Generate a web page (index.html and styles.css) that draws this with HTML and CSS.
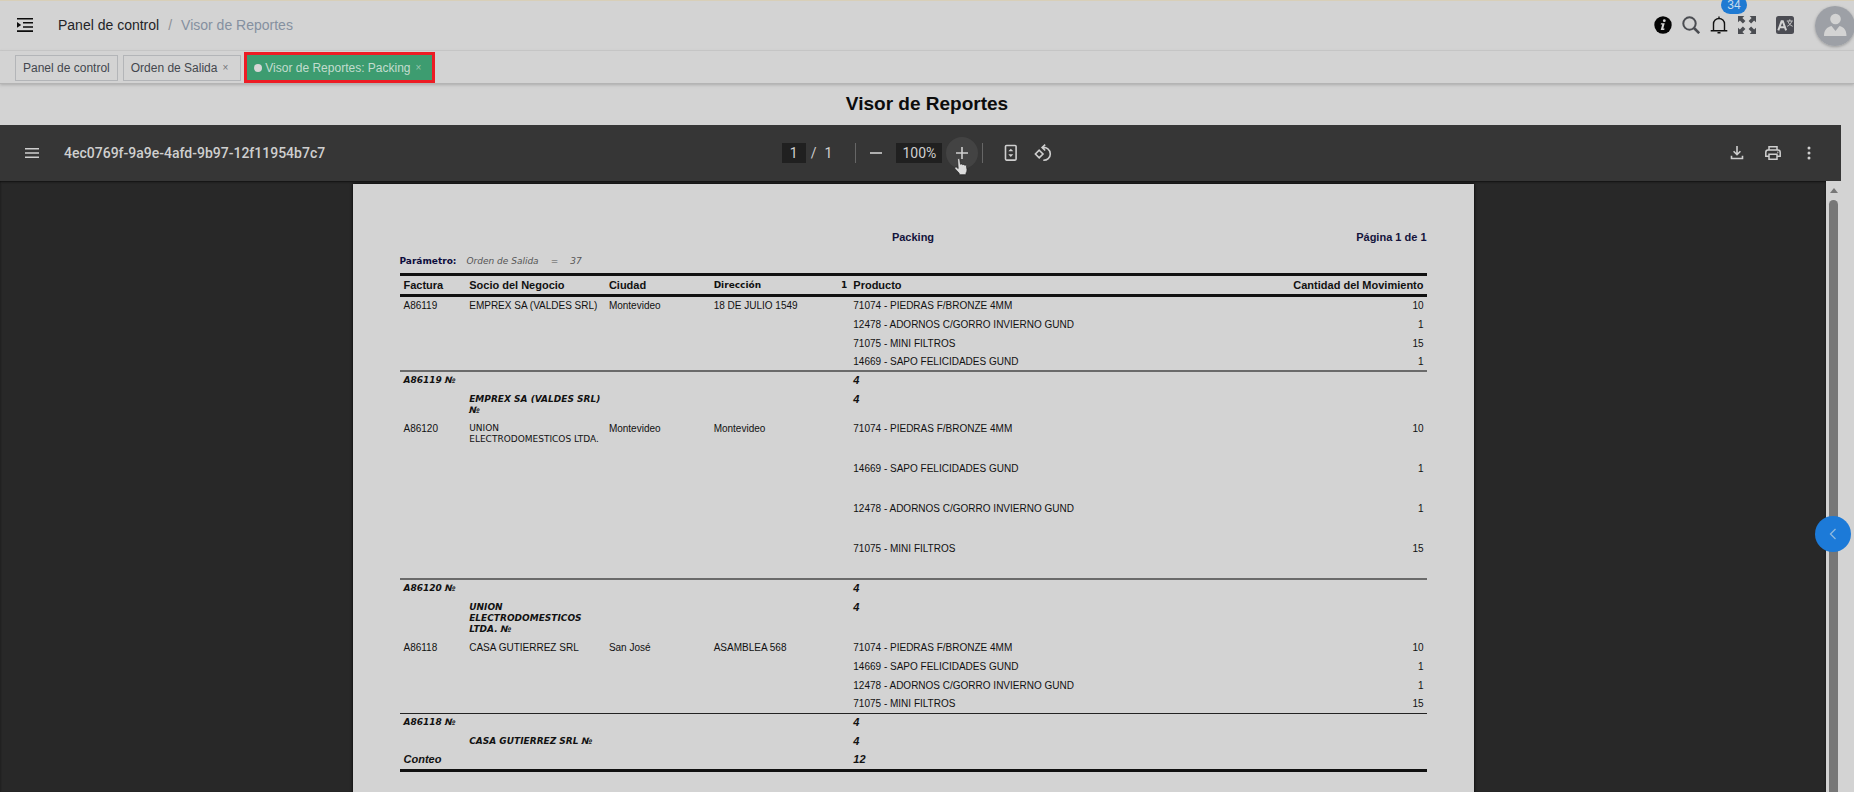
FILE: index.html
```html
<!DOCTYPE html>
<html lang="es">
<head>
<meta charset="utf-8">
<title>Visor de Reportes</title>
<link rel="stylesheet" href="styles.css">
</head>
<body>
<div class="app">
  <header class="navbar">
    <button class="icon-btn toggle" aria-label="Menú">
      <svg width="16" height="14" viewBox="0 0 16 14"><path d="M0 0h16v1.6H0zM6 4h10v1.6H6zM6 8.2h10v1.6H6zM0 12.3h16v1.6H0zM0 4l4.2 2.9L0 9.800z" fill="#0c0c0c"/></svg>
    </button>
    <nav class="breadcrumb"><a href="#">Panel de control</a><span class="slash">/</span><span>Visor de Reportes</span></nav>
    <div class="tools">
      <button class="icon-btn info" aria-label="Información">
        <svg width="18" height="18" viewBox="0 0 18 18"><circle cx="9" cy="9" r="8.700" fill="#050505"/><circle cx="10.300" cy="4.700" r="1.400" fill="#d3d3d3"/><path d="M7 7.200h3.700L9.300 12.600h1.300l-.4 1.300H6.700l1.500-5.400H6.700z" fill="#d3d3d3"/></svg>
      </button>
      <button class="icon-btn" aria-label="Buscar">
        <svg width="18" height="18" viewBox="0 0 18 18" fill="none" stroke="#4b4d52"><circle cx="7.500" cy="7.500" r="6.200" stroke-width="2"/><path d="M12 12l5.200 5.200" stroke-width="2.600"/></svg>
      </button>
      <button class="icon-btn bell" aria-label="Notificaciones">
        <svg width="18" height="18" viewBox="0 0 18 18" fill="none" stroke="#111" stroke-width="1.400"><path d="M3.500 14.600V8a5.500 5.500 0 0 1 11 0v6.600M.7 14.700h16.600M9 .5v2M7.500 16.700h3"/></svg>
        <span class="badge">34</span>
      </button>
      <button class="icon-btn" aria-label="Pantalla completa">
        <svg width="18" height="18" viewBox="0 0 18 18" fill="#4b4d52"><path d="M0 0h6.300L4.400 1.900l3 3-2.500 2.500-3-3L0 6.300z"/><path d="M18 0h-6.300l1.900 1.900-3 3 2.500 2.500 3-3L18 6.300zM0 18h6.300l-1.900-1.900 3-3-2.500-2.500-3 3L0 11.700zM18 18h-6.300l1.900-1.900-3-3 2.500-2.500 3 3 1.900-1.900z"/></svg>
      </button>
      <button class="icon-btn lang" aria-label="Idioma">
        <svg width="18" height="18" viewBox="0 0 18 18" fill="none" stroke="#d3d3d3"><rect width="18" height="18" rx="2.500" fill="#4b4c53" stroke="none"/><path d="M2.300 14.300L5.600 5.300h1.200l3.300 9M3.700 11.300h5" stroke-width="2"/><path d="M10.800 5h6M13.800 3.300V5M15.700 5.300c-.6 2.300-2.200 4-4.500 5M12 5.300c.6 2.300 2.200 4 4.700 5" stroke-width=".9"/></svg>
      </button>
      <button class="icon-btn avatar" aria-label="Usuario">
        <svg width="40" height="40" viewBox="0 0 40 40"><circle cx="20" cy="20" r="20" fill="#9da0a6"/><circle cx="20.500" cy="13" r="5.300" fill="#d3d3d3"/><path d="M9 30c0-6 3-9 7.500-10l4 5 4-5c4.500 1 7 4 7 10z" fill="#d3d3d3"/></svg>
      </button>
    </div>
  </header>
  <nav class="tabs">
    <a class="tab" href="#">Panel de control</a>
    <a class="tab closable" href="#">Orden de Salida <span class="close">×</span></a>
    <a class="tab active" href="#"><i class="dot"></i>Visor de Reportes: Packing <span class="close">×</span></a>
  </nav>
  <main class="main">
    <h1>Visor de Reportes</h1>
    <section class="viewer">
      <div class="bar">
        <div class="bar-left">
          <button class="pdf-btn" aria-label="Barra lateral"><svg width="14" height="10" viewBox="0 0 14 10" fill="#cfcfcf"><path d="M0 0h14v1.500H0zM0 4.200h14v1.500H0zM0 8.400h14v1.500H0z"/></svg></button>
          <span class="doc-name">4ec0769f-9a9e-4afd-9b97-12f11954b7c7</span>
        </div>
        <div class="bar-center">
          <input class="field page-no" aria-label="Página" value="1"><span class="of">/</span><span>1</span>
          <i class="sep"></i>
          <button class="pdf-btn" aria-label="Alejar"><svg width="12" height="12" viewBox="0 0 12 12"><path d="M0 5.200h12v1.600H0z" fill="#cfcfcf"/></svg></button>
          <input class="field zoom" aria-label="Zoom" value="100%">
          <button class="pdf-btn hover" aria-label="Acercar"><svg width="12" height="12" viewBox="0 0 12 12"><path d="M0 5.200h5.200V0h1.600v5.200H12v1.600H6.800V12H5.200V6.800H0z" fill="#cfcfcf"/></svg>
            <svg class="cursor" width="16" height="18" viewBox="0 0 16 18"><path d="M4.600 1.600c0-1.400 2-1.400 2.200 0l.7 4.700c.7-.6 1.800-.4 2.100.4.700-.5 1.700-.2 2 .5.900-.3 1.800.2 1.900 1.200l.5 3.300c.1 1.300-.4 2.500-1 3.400v1.600H6.200v-1.400L2 10.700c-.8-1.200.7-2.300 1.700-1.400l1.500 1.300z" fill="#dcdcdc" stroke="#222" stroke-width=".7"/></svg></button>
          <i class="sep near"></i>
          <button class="pdf-btn" aria-label="Ajustar a la página"><svg width="14" height="18" viewBox="0 0 14 18"><rect x="1.500" y="1.500" width="10.600" height="14.600" rx="1" fill="none" stroke="#cfcfcf" stroke-width="1.600"/><path d="M4.300 7.300h5L6.800 4.700zM4.300 10.300h5l-2.500 2.600z" fill="#cfcfcf"/></svg></button>
          <button class="pdf-btn" aria-label="Girar"><svg width="18" height="18" viewBox="0 0 18 18" fill="none" stroke="#cfcfcf" stroke-width="1.600"><path d="M5.200 6.200L9 10l-3.800 3.800L1.400 10zM8.300 3.500c4.200-.6 8 2.200 8 6.500 0 3.800-3.200 6.500-7 6.300M11.200.6L8.100 3.500l3.100 3"/></svg></button>
        </div>
        <div class="bar-right">
          <button class="pdf-btn" aria-label="Descargar"><svg width="14" height="14" viewBox="0 0 14 14" fill="none" stroke="#cfcfcf" stroke-width="1.600"><path d="M7 0v8.500M3.600 5.300L7 8.700l3.400-3.400M1.500 9.700v2.800h11V9.700"/></svg></button>
          <button class="pdf-btn" aria-label="Imprimir"><svg width="16" height="14" viewBox="0 0 16 14" fill="none" stroke="#cfcfcf" stroke-width="1.500"><path d="M4 4V.8h8V4M4 10.300H.8V6.500C.8 5 1.600 4.100 3 4.100h10c1.400 0 2.200.9 2.200 2.400v3.800H12M4 8.200h8v5H4z"/><path d="M12 6.200h1.500" stroke-width="1"/></svg></button>
          <button class="pdf-btn" aria-label="Más"><svg width="4" height="14" viewBox="0 0 4 14" fill="#cfcfcf"><circle cx="2" cy="2" r="1.500"/><circle cx="2" cy="7" r="1.500"/><circle cx="2" cy="12" r="1.500"/></svg></button>
        </div>
      </div>
      <div class="pane">
        <div class="canvas">
          <article class="sheet">
            <div class="sheet-head"><span></span><b>Packing</b><b class="end">Página 1 de 1</b></div>
            <div class="param"><b>Parámetro:</b><i>Orden de Salida</i><i>=</i><i>37</i></div>
            <table class="report">
              <colgroup><col class="w1"><col class="w2"><col class="w3"><col class="w4"><col class="w5"><col class="w6"></colgroup>
              <thead><tr><th>Factura</th><th>Socio del Negocio</th><th>Ciudad</th><th class="alt"><span class="split"><span>Dirección</span><span>1</span></span></th><th>Producto</th><th class="num">Cantidad del Movimiento</th></tr></thead>
              <tbody>
                <tr><td>A86119</td><td>EMPREX SA (VALDES SRL)</td><td>Montevideo</td><td>18 DE JULIO 1549</td><td>71074 - PIEDRAS F/BRONZE 4MM</td><td class="num">10</td></tr>
                <tr><td></td><td></td><td></td><td></td><td>12478 - ADORNOS C/GORRO INVIERNO GUND</td><td class="num">1</td></tr>
                <tr class="short"><td></td><td></td><td></td><td></td><td>71075 - MINI FILTROS</td><td class="num">15</td></tr>
                <tr class="rule"><td></td><td></td><td></td><td></td><td>14669 - SAPO FELICIDADES GUND</td><td class="num">1</td></tr>
                <tr class="sum"><td>A86119 №</td><td></td><td></td><td></td><td class="count">4</td><td></td></tr>
                <tr class="sum"><td></td><td>EMPREX SA (VALDES SRL) №</td><td></td><td></td><td class="count">4</td><td></td></tr>
              </tbody>
              <tbody>
                <tr class="tall"><td>A86120</td><td class="alt">UNION<br>ELECTRODOMESTICOS LTDA.</td><td>Montevideo</td><td>Montevideo</td><td>71074 - PIEDRAS F/BRONZE 4MM</td><td class="num">10</td></tr>
                <tr class="tall"><td></td><td></td><td></td><td></td><td>14669 - SAPO FELICIDADES GUND</td><td class="num">1</td></tr>
                <tr class="tall"><td></td><td></td><td></td><td></td><td>12478 - ADORNOS C/GORRO INVIERNO GUND</td><td class="num">1</td></tr>
                <tr class="tall rule"><td></td><td></td><td></td><td></td><td>71075 - MINI FILTROS</td><td class="num">15</td></tr>
                <tr class="sum"><td>A86120 №</td><td></td><td></td><td></td><td class="count">4</td><td></td></tr>
                <tr class="sum"><td></td><td>UNION ELECTRODOMESTICOS LTDA. №</td><td></td><td></td><td class="count">4</td><td></td></tr>
              </tbody>
              <tbody>
                <tr><td>A86118</td><td>CASA GUTIERREZ SRL</td><td>San José</td><td>ASAMBLEA 568</td><td>71074 - PIEDRAS F/BRONZE 4MM</td><td class="num">10</td></tr>
                <tr><td></td><td></td><td></td><td></td><td>14669 - SAPO FELICIDADES GUND</td><td class="num">1</td></tr>
                <tr class="short"><td></td><td></td><td></td><td></td><td>12478 - ADORNOS C/GORRO INVIERNO GUND</td><td class="num">1</td></tr>
                <tr class="rule dark"><td></td><td></td><td></td><td></td><td>71075 - MINI FILTROS</td><td class="num">15</td></tr>
                <tr class="sum"><td>A86118 №</td><td></td><td></td><td></td><td class="count">4</td><td></td></tr>
                <tr class="sum short"><td></td><td>CASA GUTIERREZ SRL №</td><td></td><td></td><td class="count">4</td><td></td></tr>
              </tbody>
              <tfoot><tr class="sum short"><td class="count">Conteo</td><td></td><td></td><td></td><td class="count">12</td><td></td></tr></tfoot>
            </table>
          </article>
        </div>
        <div class="scroll"><i class="arrow"></i><i class="thumb"></i></div>
      </div>
    </section>
  </main>
  <button class="float" aria-label="Abrir panel"><svg width="8" height="12" viewBox="0 0 8 12"><path d="M6.500 1L1.500 6l5 5" fill="none" stroke="#8fb9de" stroke-width="1.300"/></svg></button>
</div>
</body>
</html>
```
FILE: styles.css
```css
* { box-sizing: border-box; }
body { margin: 0; background: #fff; font-family: "Liberation Sans", Arial, sans-serif; }
button { border: 0; padding: 0; background: none; }
a { color: inherit; text-decoration: none; }
svg { display: block; }

.app {
  position: relative;
  display: flex;
  flex-direction: column;
  height: 100vh;
  margin-right: 11px;
  overflow: hidden;
  background: #d3d3d3;
}

.navbar {
  display: flex;
  align-items: center;
  height: 51px;
  padding: 0 0 2px 17px;
  border-top: 1px solid #d8cfb8;
  border-bottom: 1px solid #cacaca;
  flex: none;
}
.breadcrumb { margin-left: 25px; font-size: 14px; color: #8590a0; }
.breadcrumb a { color: #232427; }
.slash { margin: 0 9px; color: #8d9097; }
.tools { display: flex; align-items: center; margin-left: auto; gap: 10px; }
.bell { position: relative; }
.badge {
  position: absolute;
  left: 11px;
  bottom: 20px;
  width: 26px;
  height: 18px;
  border-radius: 9px;
  background: #1f7ad2;
  color: #c8dcec;
  font-size: 12px;
  line-height: 18px;
  text-align: center;
}
.lang { margin-left: 10px; }
.avatar { margin: 3px -1px 0 11px; border-radius: 50%; box-shadow: 0 1px 3px #999; }

.tabs {
  display: flex;
  align-items: center;
  gap: 5px;
  height: 33px;
  padding: 1px 0 0 15px;
  border-bottom: 1px solid #b4b4b4;
  box-shadow: 0 1px 3px #aaa;
  font-size: 12px;
  flex: none;
}
.tab {
  display: flex;
  align-items: center;
  height: 26px;
  padding: 0 7px;
  border: 1px solid #b3b5b8;
  color: #44474e;
}
.closable { padding-right: 12px; }
.close { margin-left: 5px; font-size: 10px; color: #73767b; }
.tab.active {
  height: 31px;
  margin-left: -2px;
  padding: 0 11px 0 7px;
  border: 3px solid #ed1c24;
  background: #3d9c70;
  color: #c3dccf;
}
.active .close { color: #98c7b0; }
.dot { width: 8px; height: 8px; margin-right: 3px; border-radius: 50%; background: #d6d6d6; }

.main { display: flex; flex-direction: column; flex: 1; min-height: 0; }
h1 { margin: 0; padding-top: 9px; height: 41px; font-size: 19px; line-height: 22px; text-align: center; color: #0c0c0c; }
.viewer { display: flex; flex-direction: column; flex: 1; min-height: 0; margin-right: 13px; }

.bar {
  display: grid;
  grid-template-columns: 1fr auto 1fr;
  align-items: center;
  height: 56px;
  padding: 0 16px;
  background: #363636;
  color: #cfcfcf;
  font: 14px Roboto, sans-serif;
  flex: none;
}
.bar-left, .bar-center, .bar-right { display: flex; align-items: center; }
.bar-left { gap: 16px; }
.bar-right { justify-content: flex-end; gap: 4px; }
.pdf-btn { display: flex; align-items: center; justify-content: center; width: 32px; height: 32px; flex: none; }
.doc-name { font-size: 14px; font-weight: 500; white-space: nowrap; }
.field { height: 20px; padding: 0; border: 0; background: #202020; color: #cfcfcf; font: 14px Roboto, sans-serif; text-align: center; }
.page-no { width: 24px; }
.of { margin: 0 8px 0 5px; }
.zoom { width: 46px; margin: 0 4px; }
.sep { width: 1px; height: 20px; margin: 0 4px 0 23px; background: #666; }
.sep.near { margin: 0 12px 0 4px; }
.hover { position: relative; border-radius: 50%; background: #434343; }
.cursor { position: absolute; left: 7px; top: 21px; }

.pane { display: flex; flex: 1; min-height: 0; }
.canvas { flex: 1; overflow: hidden; padding-top: 3px; background: #282828; box-shadow: inset 0 1px 2px #111; }
.sheet {
  max-width: 1121px;
  min-height: 100%;
  margin: 0 auto;
  padding: 47px;
  background: #d3d3d3;
  color: #111;
  font-size: 10px;
  line-height: 11px;
  box-shadow: 0 0 3px #000;
}
.sheet-head { display: grid; grid-template-columns: 1fr auto 1fr; font-size: 11px; line-height: 12px; color: #14143c; }
.end { text-align: right; }
.param { display: flex; margin: 12px 0 6px; font: 9px/12px "DejaVu Sans", sans-serif; color: #555; gap: 12px; }
.param b { color: #0c0c3c; margin-right: -2px; }

.report { width: 100%; table-layout: fixed; border-spacing: 0; border-top: 3px solid #111; border-bottom: 3px solid #111; }
.w1 { width: 6.400%; }
.w2 { width: 13.600%; }
.w3 { width: 10.200%; }
.w4 { width: 13.600%; }
.w5 { width: 33.100%; }
.w6 { width: 23.100%; }
.report th, .report td { padding: 3px 0 0 4px; height: 19px; text-align: left; vertical-align: top; }
.report th { padding-top: 4px; height: 21px; font-size: 11px; border-bottom: 3px solid #111; }
.report .num { text-align: right; padding-right: 3px; }
.report .alt { font-family: "DejaVu Sans", sans-serif; font-size: 9px; }
.split { display: flex; justify-content: space-between; padding-right: 2px; }
.report .short td { height: 18px; }
.report .tall td { height: 40px; }
.report .sum td { padding-bottom: 4px; font: italic bold 9px/11px "DejaVu Sans", sans-serif; }
.report .sum .count { font: italic bold 11px/11px "Liberation Sans", Arial, sans-serif; }
.report .rule td { border-bottom: 2px solid #6a6a6a; }
.report .dark td { border-bottom: 1px solid #222; }

.scroll { display: flex; flex-direction: column; align-items: center; width: 15px; padding-top: 7px; }
.arrow { border: 4px solid transparent; border-bottom: 5px solid #777; border-top: 0; }
.thumb { width: 9px; margin-top: 7px; flex: 1; border-radius: 5px 5px 0 0; background: #777; }

.float {
  position: absolute;
  right: 3px;
  top: 516px;
  display: flex;
  align-items: center;
  justify-content: center;
  width: 36px;
  height: 36px;
  border-radius: 50%;
  background: #1c7ad8;
}
```
